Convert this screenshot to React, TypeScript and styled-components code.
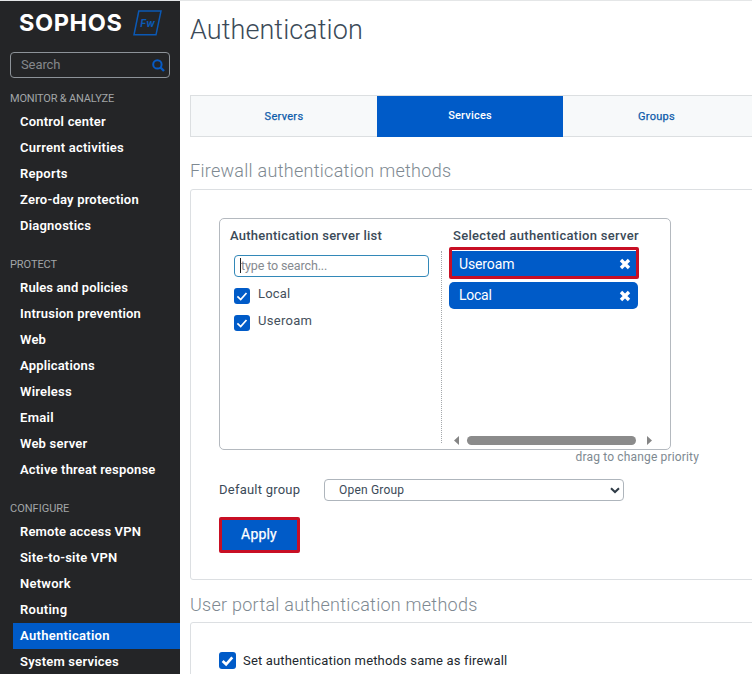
import React from "react";
import styled, { createGlobalStyle } from "styled-components";

const Global = createGlobalStyle`
  * { box-sizing: border-box; }
  body { margin: 0; background: #fff; overflow: hidden; font-family: Roboto, "Liberation Sans", sans-serif; font-size: 13px; color: #3b4a58; }
  h1, h2, h3, p { margin: 0; }
  button, input { font: inherit; }
`;

const Page = styled.div`
  display: flex;
  width: 752px;
  height: 674px;
  overflow: hidden;
  border-top: 1px solid #e4e6e7;
`;

const Sidebar = styled.aside`
  width: 180px;
  flex: none;
  background: #242527;
  color: #fff;
`;

const Brand = styled.div`
  display: flex;
  align-items: center;
  height: 51px;
  padding: 0 0 7px 19px;
`;

const Wordmark = styled.span`
  width: 114px;
  font: 700 23.5px/28px Inter, sans-serif;
  letter-spacing: 0.6px;
`;

const SearchBox = styled.div`
  display: flex;
  align-items: center;
  justify-content: space-between;
  width: 160px;
  height: 26px;
  margin-left: 10px;
  padding: 0 4px 0 10px;
  border: 1px solid #8d9399;
  border-radius: 4px;
  color: #85888b;
  line-height: 15px;
  letter-spacing: -0.1px;
`;

const SearchText = styled.span`
  padding-bottom: 2px;
`;

const GroupLabel = styled.h3<{ $first?: boolean; $ls: number }>`
  height: ${(p) => (p.$first ? 31 : 36)}px;
  padding: ${(p) => (p.$first ? 13 : 18)}px 0 0 10px;
  font-size: 11px;
  line-height: 15px;
  font-weight: 400;
  color: #a2a5a8;
  letter-spacing: ${(p) => p.$ls}px;
`;

const NavItem = styled.div<{ $active?: boolean; $ls: number }>`
  height: 26px;
  margin-left: 13px;
  padding-left: 7px;
  font: 600 13px/25px Roboto, sans-serif;
  letter-spacing: ${(p) => p.$ls}px;
  background: ${(p) => (p.$active ? "#005bc8" : "transparent")};
`;

const Main = styled.main`
  width: 572px;
  flex: none;
  padding-left: 10px;
`;

const Title = styled.h1`
  height: 94px;
  padding-top: 12px;
  font-weight: 300;
  font-size: 27px;
  line-height: 34px;
  letter-spacing: 0.08px;
`;

const Tabs = styled.div`
  display: grid;
  grid-template-columns: 186px 186px 187px;
  width: 600px;
  height: 42px;
  border: 1px solid #dcdfe1;
  background: #f7f9fa;
`;

const Tab = styled.div<{ $active?: boolean }>`
  text-align: center;
  font-size: 11px;
  font-weight: ${(p) => (p.$active ? 500 : 400)};
  line-height: ${(p) => (p.$active ? 39 : 41)}px;
  letter-spacing: ${(p) => (p.$active ? 0.2 : 0.3)}px;
  -webkit-text-stroke: ${(p) => (p.$active ? 0 : 0.25)}px currentColor;
  color: ${(p) => (p.$active ? "#fff" : "#0f5cab")};
  background: ${(p) => (p.$active ? "#005bc8" : "transparent")};
`;

const SectionTitle = styled.h2<{ $h: number; $top: number; $ls: number }>`
  height: ${(p) => p.$h}px;
  padding-top: ${(p) => p.$top}px;
  font-weight: 300;
  font-size: 18px;
  line-height: 24px;
  letter-spacing: ${(p) => p.$ls}px;
  color: #7e8991;
`;

const Panel = styled.section<{ $h: number }>`
  width: 600px;
  height: ${(p) => p.$h}px;
  padding: 28px 0 0 28px;
  border: 1px solid #dcdfe2;
  border-radius: 3px;
`;

const Picker = styled.div`
  display: grid;
  grid-template-columns: 222px 228px;
  width: 452px;
  height: 232px;
  border: 1px solid #b4b9bf;
  border-radius: 5px;
`;

const Column = styled.div`
  display: flex;
  flex-direction: column;
`;

const ColumnTitle = styled.h3<{ $left: number; $ls: number }>`
  height: 31px;
  padding: 9px 0 0 ${(p) => p.$left}px;
  font-size: 13px;
  font-weight: 500;
  line-height: 16px;
  letter-spacing: ${(p) => p.$ls}px;
  white-space: nowrap;
`;

const Available = styled.div`
  flex: none;
  height: 192px;
  margin-top: 1px;
  padding: 4px 0 0 14px;
  border-right: 1px dotted #a4a8ac;
  width: 222px;
`;

const Filter = styled.div`
  display: flex;
  align-items: center;
  width: 195px;
  height: 22px;
  padding: 0 0 1px 5px;
  border: 1px solid #3388b8;
  border-radius: 4px;
  color: #858a8f;
  font-size: 12.5px;
  line-height: 14px;
  letter-spacing: -0.12px;
`;

const Caret = styled.span`
  width: 1px;
  height: 15px;
  background: #222;
`;

const Option = styled.label<{ $ls: number }>`
  display: flex;
  height: 16px;
  margin-top: 11px;
  gap: 8px;
  line-height: 11px;
  letter-spacing: ${(p) => p.$ls}px;
  color: #44505c;
`;

const Box = styled.span<{ $size: number }>`
  display: grid;
  place-items: center;
  flex: none;
  width: ${(p) => p.$size}px;
  height: ${(p) => p.$size}px;
  border-radius: 3px;
  background: #005bc8;
`;

const Chips = styled.div`
  display: flex;
  flex-direction: column;
  gap: 3px;
  height: 186px;
  padding: 0 0 0 7px;
  margin-top: -3px;
`;

const Chip = styled.div<{ $marked?: boolean; $ls: number }>`
  display: flex;
  align-items: center;
  justify-content: space-between;
  width: ${(p) => (p.$marked ? 190 : 189)}px;
  height: ${(p) => (p.$marked ? 32 : 27)}px;
  padding: ${(p) => (p.$marked ? "1px 5px 0 7px" : "0 7px 0 10px")};
  border: ${(p) => (p.$marked ? "3px solid #c80f24" : "0")};
  border-radius: ${(p) => (p.$marked ? 2 : 5)}px;
  box-shadow: ${(p) => (p.$marked ? "inset 0 1px #fff" : "none")};
  background: #005bc8;
  color: #fff;
  font-size: 14px;
  line-height: 16px;
  letter-spacing: ${(p) => p.$ls}px;
`;

const ChipName = styled.span<{ $lift: number }>`
  padding-bottom: ${(p) => p.$lift}px;
`;

const ScrollRow = styled.div`
  display: flex;
  align-items: center;
  height: 9px;
  margin-top: 3px;
  padding-left: 12px;
`;

const Thumb = styled.div`
  width: 169px;
  height: 9px;
  margin: 0 11px 0 8px;
  border-radius: 5px;
  background: #8b8b8b;
`;

const Hint = styled.p`
  width: 480px;
  height: 29px;
  line-height: 14px;
  text-align: right;
  font-size: 12px;
  color: #7e8991;
  letter-spacing: 0.16px;
`;

const FormRow = styled.div`
  display: flex;
  align-items: center;
  height: 22px;
`;

const FieldLabel = styled.span`
  width: 105px;
  padding-bottom: 2px;
  letter-spacing: 0.23px;
`;

const Select = styled.div`
  display: flex;
  align-items: center;
  justify-content: space-between;
  width: 300px;
  height: 22px;
  padding: 0 3px 0 14px;
  border: 1px solid #aeb5bc;
  border-radius: 4px;
  font-size: 12px;
  letter-spacing: 0.2px;
`;

const Apply = styled.button`
  display: block;
  width: 81px;
  height: 36px;
  margin-top: 16px;
  padding: 0 1px 2px 0;
  border: 3px solid #c80f24;
  border-radius: 2px;
  background: #005bc8;
  color: #fff;
  font-size: 14px;
  letter-spacing: 0.2px;
  -webkit-text-stroke: 0.25px currentColor;
`;

const SameAs = styled.label`
  display: flex;
  align-items: center;
  gap: 7px;
  height: 17px;
  margin-top: 1px;
  color: #22282e;
  letter-spacing: 0.17px;
`;

const Check = ({ size, bold }: { size: number; bold?: boolean }) => (
  <Box $size={size}>
    <svg width={size} height={size} viewBox="0 0 16 16" fill="none">
      <path d="M3.4 8.4 6.7 11.6 12.5 5" stroke="#fff" strokeWidth={bold ? 2.5 : 1.7} />
    </svg>
  </Box>
);

const Cross = () => (
  <svg width="12" height="12" viewBox="0 0 12 12">
    <path d="M2 2 10 10M10 2 2 10" stroke="#fff" strokeWidth="3.4" />
  </svg>
);

const groups: { label: string; ls: number; items: [string, number][] }[] = [
  {
    label: "MONITOR & ANALYZE",
    ls: -0.19,
    items: [
      ["Control center", 0.21], ["Current activities", 0.24], ["Reports", 0.25],
      ["Zero-day protection", 0.21], ["Diagnostics", 0.22],
    ],
  },
  {
    label: "PROTECT",
    ls: -0.07,
    items: [
      ["Rules and policies", 0.12], ["Intrusion prevention", 0.2], ["Web", 0.2], ["Applications", 0.17],
      ["Wireless", 0.22], ["Email", 0.3], ["Web server", 0.2], ["Active threat response", 0.18],
    ],
  },
  {
    label: "CONFIGURE",
    ls: 0,
    items: [
      ["Remote access VPN", 0.14], ["Site-to-site VPN", 0.18], ["Network", 0.25], ["Routing", 0.3],
      ["Authentication", 0.3], ["System services", 0.2],
    ],
  },
];

export default function App() {
  return (
    <>
      <Global />
      <Page>
        <Sidebar>
          <Brand>
            <Wordmark>SOPHOS</Wordmark>
            <svg width="29" height="26" viewBox="0 0 29 26">
              <path d="M5.8 1H28L23 24.8H1Z" fill="none" stroke="#0b59b5" strokeWidth="1.5" />
              <text x="7.3" y="16.5" fontFamily="Inter, sans-serif" fontSize="10" fontWeight="700" fontStyle="italic" fill="#0b59b5">Fw</text>
            </svg>
          </Brand>
          <SearchBox>
            <SearchText>Search</SearchText>
            <svg width="13" height="13" viewBox="0 0 13 13" fill="none" stroke="#075bc5" strokeWidth="2">
              <circle cx="5.4" cy="5.4" r="4.2" />
              <path d="M8.5 8.5 12 12" strokeWidth="2.4" />
            </svg>
          </SearchBox>
          {groups.map((g, i) => (
            <React.Fragment key={g.label}>
              <GroupLabel $first={i === 0} $ls={g.ls}>{g.label}</GroupLabel>
              {g.items.map(([name, ls]) => (
                <NavItem key={name} $ls={ls} $active={name === "Authentication"}>{name}</NavItem>
              ))}
            </React.Fragment>
          ))}
        </Sidebar>
        <Main>
          <Title>Authentication</Title>
          <Tabs>
            <Tab>Servers</Tab>
            <Tab $active>Services</Tab>
            <Tab>Groups</Tab>
          </Tabs>
          <SectionTitle $h={52} $top={22} $ls={0.28}>Firewall authentication methods</SectionTitle>
          <Panel $h={391}>
            <Picker>
              <Column>
                <ColumnTitle $left={10} $ls={0.25}>Authentication server list</ColumnTitle>
                <Available>
                  <Filter><Caret />type to search...</Filter>
                  <Option $ls={0.2}><Check size={16} />Local</Option>
                  <Option $ls={0.3}><Check size={16} />Useroam</Option>
                </Available>
              </Column>
              <Column>
                <ColumnTitle $left={11} $ls={0.3}>Selected authentication server</ColumnTitle>
                <Chips>
                  <Chip $marked $ls={-0.12}><ChipName $lift={0}>Useroam</ChipName><Cross /></Chip>
                  <Chip $ls={-0.25}><ChipName $lift={2}>Local</ChipName><Cross /></Chip>
                </Chips>
                <ScrollRow>
                  <svg width="5" height="9" viewBox="0 0 5 9"><path d="M5 0V9L0 4.5Z" fill="#858585" /></svg>
                  <Thumb />
                  <svg width="5" height="9" viewBox="0 0 5 9"><path d="M0 0V9L5 4.5Z" fill="#858585" /></svg>
                </ScrollRow>
              </Column>
            </Picker>
            <Hint>drag to change priority</Hint>
            <FormRow>
              <FieldLabel>Default group</FieldLabel>
              <Select>
                Open Group
                <svg width="10" height="7" viewBox="0 0 10 7" fill="none"><path d="M1 1.2 5 5 9 1.2" stroke="#2f3b46" strokeWidth="2" /></svg>
              </Select>
            </FormRow>
            <Apply>Apply</Apply>
          </Panel>
          <SectionTitle $h={42} $top={13} $ls={0.26}>User portal authentication methods</SectionTitle>
          <Panel $h={100}>
            <SameAs><Check size={17} bold />Set authentication methods same as firewall</SameAs>
          </Panel>
        </Main>
      </Page>
    </>
  );
}
